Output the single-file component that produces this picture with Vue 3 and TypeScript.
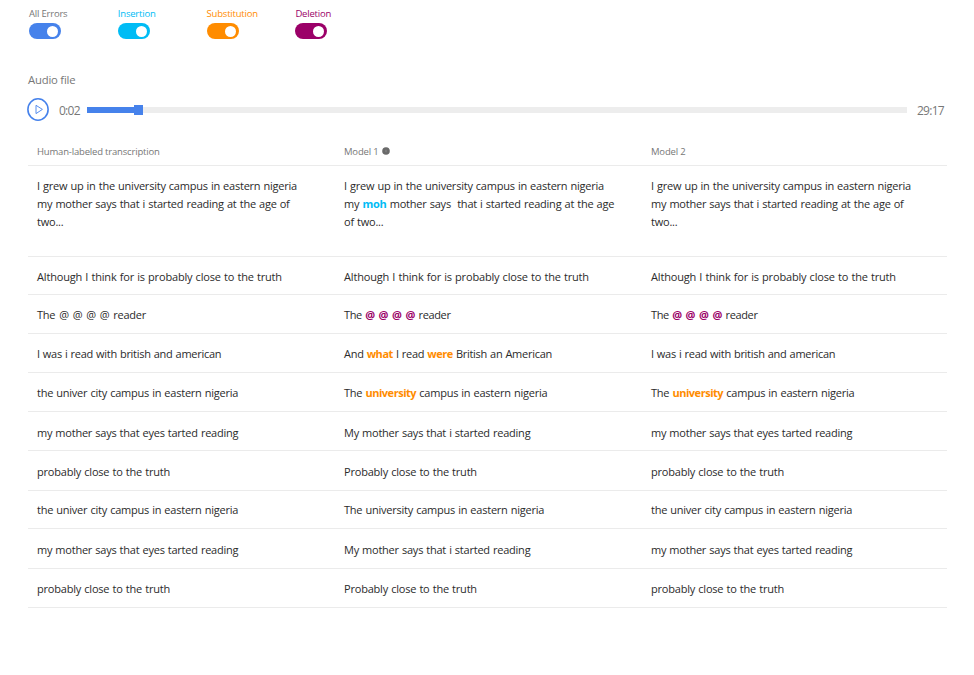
<script setup lang="ts">
import { ref } from 'vue'

type Kind = 'insertion' | 'substitution' | 'deletion'
interface Part { text: string; kind?: Kind }
type Line = Part[]
interface Row { height: number; variant?: string; cells: Line[][] }

const filters = ref([
  { label: 'All Errors', name: 'all', on: true },
  { label: 'Insertion', name: 'insertion', on: true },
  { label: 'Substitution', name: 'substitution', on: true },
  { label: 'Deletion', name: 'deletion', on: true },
])

const t = (text: string, kind?: Kind): Part => ({ text, kind })
const plain = (...lines: string[]): Line[] => lines.map((line) => [t(line)])

const intro = plain(
  'I grew up in the university campus in eastern nigeria',
  'my mother says that i started reading at the age of',
  'two...',
)
const although = plain('Although I think for is probably close to the truth')
const british = plain('I was i read with british and american')
const univer = plain('the univer city campus in eastern nigeria')
const eyes = plain('my mother says that eyes tarted reading')
const close = plain('probably close to the truth')
const deleted: Line[] = [[t('The '), t('@ @ @ @', 'deletion'), t(' reader')]]
const university: Line[] = [[t('The '), t('university', 'substitution'), t(' campus in eastern nigeria')]]

const rows: Row[] = [
  {
    height: 91,
    variant: 'tall',
    cells: [
      intro,
      [
        [t('I grew up in the university campus in eastern nigeria')],
        [t('my '), t('moh', 'insertion'), t(' mother says  that i started reading at the age')],
        [t('of two...')],
      ],
      intro,
    ],
  },
  { height: 38, variant: 'wide lower', cells: [although, although, although] },
  { height: 39, variant: 'symbols', cells: [plain('The @ @ @ @ reader'), deleted, deleted] },
  {
    height: 39,
    variant: 'tighter',
    cells: [
      british,
      [[t('And '), t('what', 'substitution'), t(' I read '), t('were', 'substitution'), t(' British an American')]],
      british,
    ],
  },
  { height: 39, variant: 'tight', cells: [univer, university, university] },
  { height: 39, variant: 'tight lower', cells: [eyes, plain('My mother says that i started reading'), eyes] },
  { height: 40, variant: 'lower', cells: [close, plain('Probably close to the truth'), close] },
  { height: 38, variant: 'tight', cells: [univer, plain('The university campus in eastern nigeria'), univer] },
  { height: 40, variant: 'tight lower', cells: [eyes, plain('My mother says that i started reading'), eyes] },
  { height: 39, cells: [close, plain('Probably close to the truth'), close] },
]
</script>

<template>
  <main class="page">
    <div class="filters">
      <div v-for="f in filters" :key="f.name" class="filter" :class="f.name">
        <span class="filter-label">{{ f.label }}</span>
        <button class="toggle" :class="{ off: !f.on }" role="switch" :aria-checked="f.on" @click="f.on = !f.on">
          <span class="knob"></span>
        </button>
      </div>
    </div>

    <h2 class="audio-title">Audio file</h2>
    <div class="player">
      <svg class="play" viewBox="0 0 22 24" width="22" height="24">
        <ellipse cx="11" cy="11.5" rx="10.1" ry="10.7" fill="none" stroke="#4682eb" stroke-width="1.6" />
        <path d="M9 7.3 L15.4 11.4 L9 15.6 Z" fill="none" stroke="#4682eb" stroke-width="0.9" />
      </svg>
      <span class="time now">0:02</span>
      <div class="track">
        <div class="played"></div>
        <div class="handle"></div>
      </div>
      <span class="time total">29:17</span>
    </div>

    <div class="table">
      <div class="row head">
        <div class="cell"><span>Human-labeled transcription</span></div>
        <div class="cell">
          <span>Model 1</span>
          <svg class="info" viewBox="0 0 8 8" width="8" height="8">
            <circle cx="4" cy="4" r="3.8" fill="#6a6a6a" />
            <path d="M4 2.8 V5.2" stroke="#929292" stroke-width="0.8" />
          </svg>
        </div>
        <div class="cell"><span>Model 2</span></div>
      </div>
      <div v-for="(row, i) in rows" :key="i" class="row" :class="row.variant" :style="{ height: row.height + 'px' }">
        <div v-for="(cell, j) in row.cells" :key="j" class="cell">
          <div class="text">
            <div v-for="(line, n) in cell" :key="n" class="line"><span v-for="(part, k) in line" :key="k" :class="part.kind && ['mark', part.kind]">{{ part.text }}</span></div>
          </div>
        </div>
      </div>
    </div>
  </main>
</template>

<style>
body {
  margin: 0;
  background: #fff;
}
</style>

<style scoped>
.page {
  box-sizing: border-box;
  width: 974px;
  height: 675px;
  padding: 7px 27px 0 28px;
  overflow: hidden;
  font-family: "Open Sans", "Noto Sans", sans-serif;
  color: #2b2b2b;
}
.filters {
  display: flex;
  height: 33px;
  padding-left: 1px;
}
.filter {
  width: 88.8px;
  display: flex;
  flex-direction: column;
  align-items: flex-start;
}
.filter-label {
  height: 16px;
  line-height: 13px;
  font-size: 9.5px;
  letter-spacing: -0.2px;
  white-space: nowrap;
}
.toggle {
  box-sizing: border-box;
  display: flex;
  align-items: center;
  justify-content: flex-end;
  width: 32px;
  height: 16px;
  padding: 0 3px;
  border: 0;
  border-radius: 8px;
  color: inherit;
  background: currentColor;
}
.toggle.off {
  justify-content: flex-start;
  opacity: 0.5;
}
.knob {
  width: 11px;
  height: 11px;
  border-radius: 50%;
  background: #fff;
}
.all { color: #4682eb; }
.all .filter-label { color: #777; }
.insertion { color: #00bcf5; }
.substitution { color: #ff8c00; }
.deletion { color: #9b0068; }
.audio-title {
  margin: 32px 0 0;
  height: 16px;
  line-height: 16px;
  font-size: 11.3px;
  letter-spacing: -0.2px;
  font-weight: 400;
  color: #777;
}
.player {
  display: flex;
  align-items: center;
  height: 24px;
  margin: 10px 0 0 -1px;
}
.time {
  font-size: 12px;
  line-height: 16px;
  color: #777;
  letter-spacing: -0.75px;
  padding-top: 1px;
}
.now { width: 28px; margin-left: 10px; }
.total { width: 30px; margin-left: 10px; }
.track {
  display: flex;
  align-items: center;
  width: 820px;
  height: 6px;
  background: #ededed;
}
.played {
  width: 47px;
  height: 6px;
  background: #4682eb;
}
.handle {
  width: 9px;
  height: 10px;
  background: #4682eb;
}
.table {
  margin-top: 15px;
}
.row {
  box-sizing: border-box;
  display: grid;
  grid-template-columns: 307px 307px 1fr;
  align-items: center;
  border-bottom: 1px solid #ebebeb;
}
.head {
  height: 29px;
  font-size: 9.5px;
  line-height: 14px;
  letter-spacing: -0.18px;
  color: #777;
}
.head .cell {
  display: flex;
  align-items: center;
  padding-top: 2px;
}
.info {
  margin: 0 0 3px 3.5px;
}
.cell {
  padding-left: 9px;
}
.text {
  margin-top: 2px;
  white-space: pre;
  font-size: 11px;
  line-height: 18.3px;
  letter-spacing: -0.2px;
  word-spacing: 0.5px;
}
.lower .text {
  margin-top: 4px;
}
.wide .text {
  letter-spacing: -0.17px;
}
.tight .text {
  letter-spacing: -0.23px;
}
.tighter .text {
  letter-spacing: -0.28px;
}
.symbols .text {
  letter-spacing: -0.25px;
  word-spacing: 1.3px;
}
.symbols .cell:not(:first-child) .text {
  letter-spacing: -0.35px;
  word-spacing: 0.7px;
}
.tall {
  align-items: start;
}
.tall .text {
  margin-top: 10.6px;
  letter-spacing: -0.225px;
}
.mark {
  font-weight: 700;
}
.mark.insertion {
  letter-spacing: -0.2px;
}
.mark.substitution {
  letter-spacing: -0.47px;
}
.mark.deletion {
  letter-spacing: 0;
}
</style>
